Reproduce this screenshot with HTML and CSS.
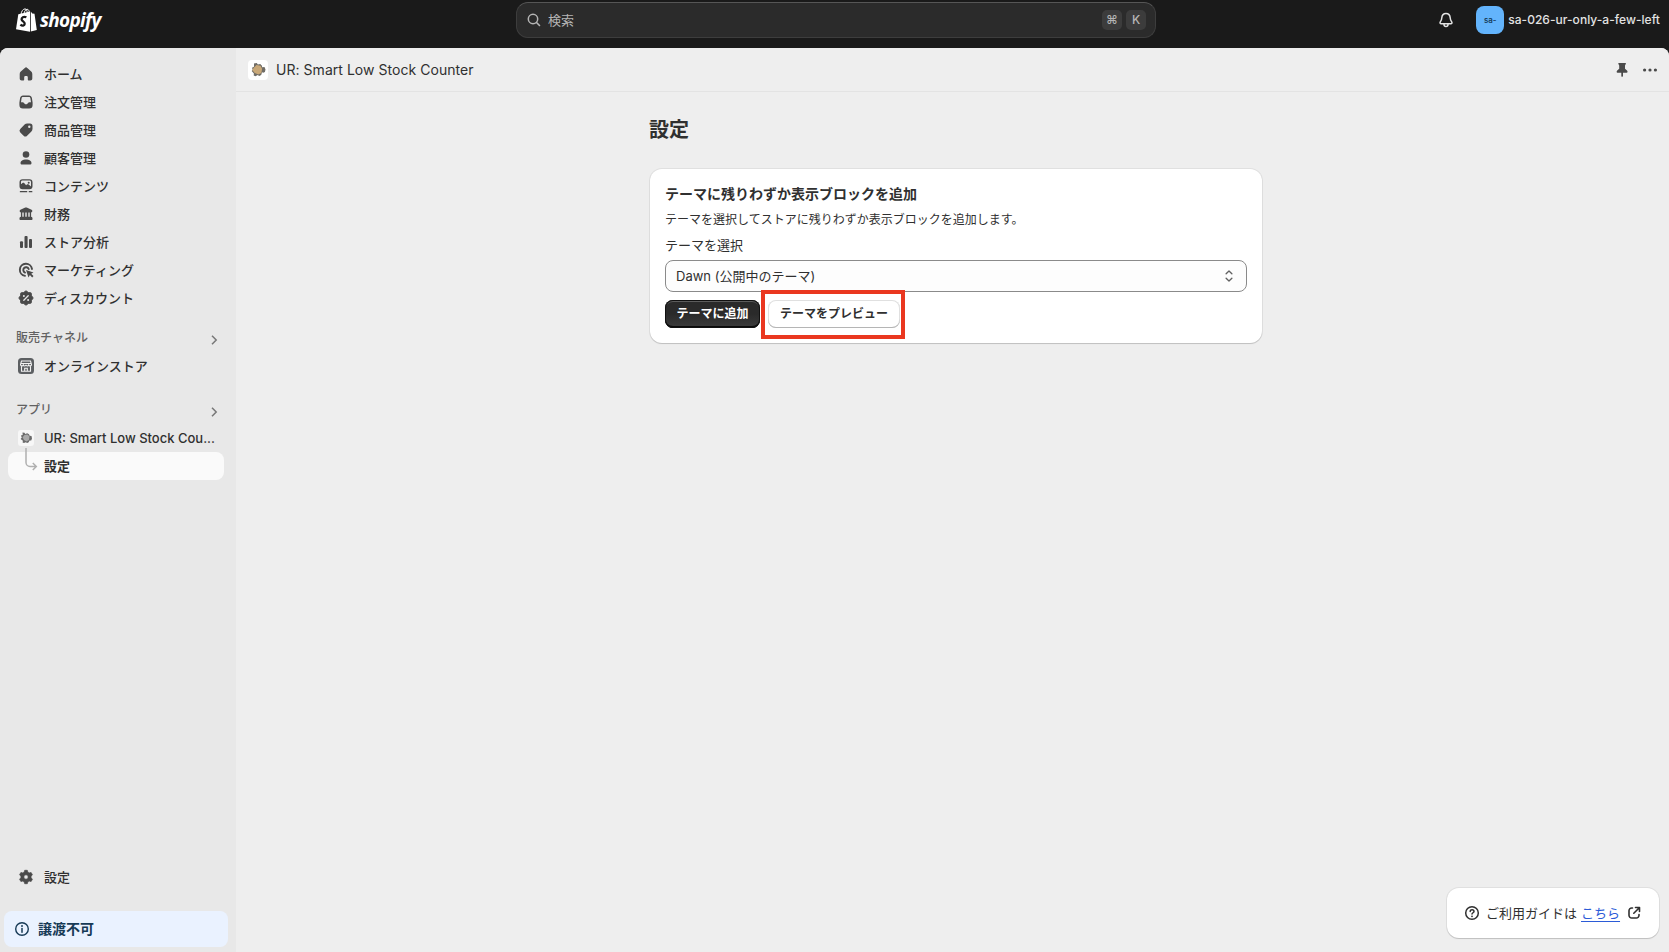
FILE: index.html
```html
<!DOCTYPE html>
<html lang="ja">
<head>
  <meta charset="UTF-8">
  <meta name="viewport" content="width=device-width, initial-scale=1.0">
  <title>設定 | UR: Smart Low Stock Counter</title>
  <link rel="stylesheet" href="styles.css">
</head>
<body>
  <header class="topbar">
    <a class="logo">
      <svg class="logo-bag" viewBox="0 0 21 24">
        <path d="M5 6.5C5.3 3.5 7 .9 9 .9c1.5 0 2.2 1.700 2.200 4.300M8 5.500C8.500 3 9.800 1.300 11.200 1.300c1.300 0 2 1.500 2.100 3" fill="none" stroke="#fff" stroke-width="1"/>
        <path d="M2.300 6.300 14 3.400v20.300L0 21.200z" fill="#fff"/>
        <path d="m14.800 3.500 1.500 1.900 2.200.3L20.800 22l-6 1.600z" fill="#fff"/>
        <path d="M10.400 9.300C7.500 8 5.400 9.500 5.600 11.400c.2 2 3.300 2.200 3.100 4.500-.2 1.900-2.400 2.300-4.300.7" fill="none" stroke="#1a1a1a" stroke-width="2.300"/>
      </svg>
      <span class="logo-text">shopify</span>
    </a>

    <div class="search">
      <svg class="icon" viewBox="0 0 20 20"><circle cx="9" cy="9" r="4.700" fill="none" stroke="currentColor" stroke-width="1.500"/><path d="m12.500 12.500 3 3" fill="none" stroke="currentColor" stroke-width="1.600" stroke-linecap="round"/></svg>
      <span class="search-text">検索</span>
      <kbd>⌘</kbd>
      <kbd>K</kbd>
    </div>

    <div class="account">
      <svg class="icon bell" viewBox="0 0 20 20"><path d="M10 3.600c-2.500 0-4 1.800-4.200 4.200-.1 2-.5 2.700-1.500 4.100-.6.900-.2 1.900.9 1.900h9.600c1.100 0 1.500-1 .9-1.900-1-1.400-1.400-2.100-1.500-4.100C14 5.400 12.500 3.600 10 3.600z"/><path d="M8 14v.4a2 2 0 0 0 4 0V14"/></svg>
      <span class="avatar">sa-</span>
      <span class="store-name">sa-026-ur-only-a-few-left</span>
    </div>
  </header>

  <div class="frame">
    <nav class="sidebar">
      <ul class="nav">
        <li><svg class="icon" viewBox="0 0 20 20"><path d="M8.800 3.900a1.900 1.900 0 0 1 2.500 0l3.900 3.700c.7.700 1.100 1.400 1.100 2.400v4.500c0 1.200-.8 2-2 2h-1.500c-.6 0-1-.4-1-1v-2.200c0-.8-.6-1.300-1.400-1.300h-.8c-.8 0-1.400.5-1.400 1.300v2.200c0 .6-.4 1-1 1H5.700c-1.200 0-2-.8-2-2V10c0-1 .4-1.700 1.100-2.400z"/></svg>ホーム</li>
        <li><svg class="icon" viewBox="0 0 20 20"><path fill-rule="evenodd" d="M7 3.500h6c1.500 0 2.600 1 2.900 2.400l.7 4.600V13a3.500 3.500 0 0 1-3.500 3.500H6.900A3.500 3.500 0 0 1 3.400 13v-2.500l.7-4.600C4.400 4.500 5.500 3.500 7 3.500zM7 5c-.7 0-1.300.5-1.400 1.200L5 10.200h1.700c.6 0 1 .3 1.300.8.900 1.700 3.100 1.700 4 0 .3-.5.7-.8 1.300-.8H15l-.6-4c-.1-.7-.7-1.200-1.400-1.200z"/></svg>注文管理</li>
        <li><svg class="icon" viewBox="0 0 20 20"><path fill-rule="evenodd" d="M11.200 3.500H14a2.500 2.500 0 0 1 2.500 2.500v2.800c0 1-.4 1.900-1.100 2.600l-4.300 4.300a2.500 2.500 0 0 1-3.500 0l-3.300-3.300a2.500 2.500 0 0 1 0-3.500l4.300-4.300c.7-.7 1.600-1.100 2.600-1.100zM13.300 8a1.200 1.200 0 1 0 0-2.400 1.200 1.200 0 0 0 0 2.400z"/></svg>商品管理</li>
        <li><svg class="icon" viewBox="0 0 20 20"><circle cx="10" cy="6.500" r="3.300"/><path d="M4.500 14.900c0-1.800 2.500-3.300 5.500-3.300s5.500 1.500 5.500 3.300c0 .9-.7 1.600-1.600 1.600H6.100c-.9 0-1.600-.7-1.600-1.600z"/></svg>顧客管理</li>
        <li><svg class="icon" viewBox="0 0 20 20"><path fill-rule="evenodd" d="M6.500 3.300h7a3 3 0 0 1 3 3v3.900a3 3 0 0 1-3 3h-7a3 3 0 0 1-3-3V6.300a3 3 0 0 1 3-3zm0 1.300C5.600 4.600 5 5.200 5 6v2.300l1.500-1.200c.6-.5 1.400-.4 1.900.1l1.700 2 .8-.7c.6-.5 1.300-.4 1.800.1L15 10.400V6.200c0-.9-.6-1.600-1.500-1.600zm6.200 3.200a1 1 0 1 0 0-2 1 1 0 0 0 0 2z"/><path d="M4.400 15.700h6.300M13.300 15.700h2.500" stroke="currentColor" stroke-width="1.300" stroke-linecap="round"/></svg>コンテンツ</li>
        <li><svg class="icon" viewBox="0 0 20 20"><path d="M9.300 3.600a1.800 1.800 0 0 1 1.400 0l4.900 2.200c1.300.6.900 2.600-.5 2.600v4.300c.8.200 1.400.9 1.400 1.700v.6c0 .7-.4 1-1 1h-11c-.6 0-1-.3-1-1v-.6c0-.8.600-1.500 1.400-1.700V8.400c-1.400 0-1.800-2-.5-2.600zM6.300 8.600v4.100h1.400V8.600zm3 0v4.100h1.400V8.600zm3 0v4.100h1.400V8.600z" fill-rule="evenodd"/></svg>財務</li>
        <li><svg class="icon" viewBox="0 0 20 20"><rect x="4" y="9.300" width="3" height="6.700" rx="1"/><rect x="8.500" y="3.900" width="3.100" height="12.100" rx="1"/><rect x="13" y="7" width="3" height="9" rx="1"/></svg>ストア分析</li>
        <li><svg class="icon" viewBox="0 0 20 20"><path d="M16 9A6.100 6.100 0 1 0 9 15.900M12.700 9A2.800 2.800 0 1 0 9 12.600" fill="none" stroke="currentColor" stroke-width="1.900" stroke-linecap="round"/><path d="m10 10 7.500 2.500-2.300 1.300 2.300 2.300-1.300 1.300-2.300-2.300-1.400 2.400z"/></svg>マーケティング</li>
        <li><svg class="icon" viewBox="0 0 20 20"><path d="m10 2.800 2.300 1.700 2.800.4.400 2.800 1.700 2.300-1.700 2.300-.4 2.800-2.800.4-2.300 1.700-2.300-1.700-2.800-.4-.4-2.800L2.800 10l1.700-2.300.4-2.800 2.800-.4z" stroke="currentColor" stroke-width="1" stroke-linejoin="round"/><path d="m7.800 12.200 4.400-4.400" stroke="#e8e8e8" stroke-width="1.300" stroke-linecap="round"/><circle cx="7.900" cy="8" r="1" fill="#e8e8e8"/><circle cx="12.100" cy="12" r="1" fill="#e8e8e8"/></svg>ディスカウント</li>
      </ul>

      <div class="nav-title">
        <span>販売チャネル</span>
        <svg class="chevron" viewBox="0 0 20 20"><path d="m8 5.800 4.200 4.200L8 14.200"/></svg>
      </div>
      <ul class="nav">
        <li><svg class="icon" viewBox="0 0 20 20"><rect x="2" y="2" width="16" height="16" rx="3.500" fill="#5c5f62"/><path d="M5.500 5h9l1 3.500c0 1.800-2.400 1.800-2.800.3-.4 1.500-2.500 1.500-2.700 0-.2 1.500-2.300 1.500-2.700 0-.4 1.500-2.800 1.500-2.800-.3zM5.500 10.500v4.700h9v-4.700M8.700 15v-2.700h2.600V15M5 7.500h10" fill="none" stroke="#f1f1f1" stroke-width="1.100"/></svg>オンラインストア</li>
      </ul>

      <div class="nav-title nav-title-apps">
        <span>アプリ</span>
        <svg class="chevron" viewBox="0 0 20 20"><path d="m8 5.800 4.200 4.200L8 14.200"/></svg>
      </div>
      <ul class="nav">
        <li>
          <svg class="icon" viewBox="0 0 20 20"><rect x="2" y="2" width="16" height="16" rx="3" fill="#f7f7f7"/><path d="m6.500 4.500 2 .3.700 1.200 2-.8 1.800 1 .6 1.600 1.900.2.500 2.500-.8 2-1.700.1-.8 1.700-1.500.7-1.500-.8-1.700.8-1.400-.6.3-1.700-2.300-1.800 1.200-1.300-.9-2 1.800-.6z" fill="#6a6a6a"/><path d="m8.500 7 3-.6 2 2.200-.5 3.500-2.500 1.400-2.500-1.500L6.500 9.200z" fill="#a9a9a9"/></svg>
          <span class="truncate">UR: Smart Low Stock Cou...</span>
        </li>
        <li class="active">
          <svg class="branch" viewBox="0 0 20 32"><path d="M10 0v14.500a4 4 0 0 0 4 4h5.500M16.800 15l3.500 3.500-3.500 3.500"/></svg>
          設定
        </li>
      </ul>

      <div class="sidebar-footer">
        <ul class="nav">
          <li><svg class="icon" viewBox="0 0 20 20"><path fill-rule="evenodd" d="M8.700 3.300h2.600l.6 1.900 1.200.7 2-.4 1.300 2.200-1.300 1.500v1.500l1.300 1.600-1.300 2.200-2-.4-1.200.7-.6 1.900H8.700l-.6-1.900-1.200-.7-2 .4-1.300-2.200 1.300-1.600V9.200L3.600 7.700l1.300-2.200 2 .4 1.200-.7zM10 12.200a2.200 2.200 0 1 0 0-4.400 2.200 2.200 0 0 0 0 4.400z" stroke="currentColor" stroke-width=".7" stroke-linejoin="round"/></svg>設定</li>
        </ul>
        <div class="plan-banner">
          <svg class="icon" viewBox="0 0 20 20"><circle cx="10" cy="10" r="6.300" fill="none" stroke="currentColor" stroke-width="1.400"/><path d="M10 9.500v3.800" stroke="currentColor" stroke-width="1.500" stroke-linecap="round"/><circle cx="10" cy="7" r=".95"/></svg>
          <span>譲渡不可</span>
        </div>
      </div>
    </nav>

    <main class="main">
      <div class="app-bar">
        <svg class="app-icon" viewBox="0 0 20 20"><rect width="20" height="20" rx="4" fill="#fff"/><path d="m6 3.500 2.700-.6 1.200 1.600 2.300-.4 1.600 1.500.4 1.700 2.300-.2 1 2.300-.6 2.600-1.600.8-1.300-.5-.8 2.600-2 1.200-1.500-1.200-2.200 1.300-1.800-.8.200-1.900L3.700 11l1-1.300L4 7.800l2-1z" fill="#6f6c66"/><path d="m8.500 5 4 .8 1.600 3-.7 4.300-3 1.400L6.700 13 4.200 10.100 6.200 7.300z" fill="#c9a878"/></svg>
        <span class="app-name">UR: Smart Low Stock Counter</span>
        <svg class="icon" viewBox="0 0 20 20"><path d="M6.800 3h6.700c.4 0 .5.400.4.800l-.9 1.600v3.400l2 1.700c.8.700.8 2.200-.3 2.200h-3.700v3.200L10 17.300l-.7-1.400v-3.200H5.500c-1.100 0-1.100-1.500-.3-2.200l2-1.700V5.400l-.9-1.600c-.1-.4 0-.8.500-.8z"/></svg>
        <svg class="icon" viewBox="0 0 20 20"><circle cx="4.600" cy="10" r="1.600"/><circle cx="10" cy="10" r="1.600"/><circle cx="15.400" cy="10" r="1.600"/></svg>
      </div>

      <div class="page">
        <h1>設定</h1>
        <section class="card">
          <h2>テーマに残りわずか表示ブロックを追加</h2>
          <p>テーマを選択してストアに残りわずか表示ブロックを追加します。</p>
          <div class="label">テーマを選択</div>
          <div class="select">
            <span>Dawn (公開中のテーマ)</span>
            <svg class="icon" viewBox="0 0 20 20"><path d="M6.800 7.500 10 4.500l3.200 3M6.800 12.500l3.200 3 3.200-3" fill="none" stroke="currentColor" stroke-width="1.500" stroke-linecap="round" stroke-linejoin="round"/></svg>
          </div>
          <div class="actions">
            <button class="btn btn-primary">テーマに追加</button>
            <div class="highlighted">
              <button class="btn btn-secondary">テーマをプレビュー</button>
            </div>
          </div>
        </section>
      </div>

      <div class="help">
        <svg class="icon" viewBox="0 0 20 20"><g fill="none" stroke="currentColor" stroke-width="1.500" stroke-linecap="round"><circle cx="10" cy="10" r="6.300"/><path d="M8.200 8.400c0-2.400 3.800-2.300 3.800 0 0 1.300-2 1.400-2 2.700"/></g><circle cx="10" cy="13.300" r=".9"/></svg>
        <span>ご利用ガイドは</span>
        <a href="#">こちら</a>
        <svg class="icon external" viewBox="0 0 20 20"><path d="M8.500 5H7.700A2.700 2.700 0 0 0 5 7.700v4.600A2.700 2.700 0 0 0 7.700 15h4.600a2.700 2.700 0 0 0 2.700-2.700v-.8M11.500 4.500h4v4M15.300 4.700 9.800 10.200" fill="none" stroke="currentColor" stroke-width="1.600" stroke-linecap="round" stroke-linejoin="round"/></svg>
      </div>
    </main>
  </div>
</body>
</html>
```

FILE: styles.css
```css
* {
  box-sizing: border-box;
}

body {
  display: flex;
  flex-direction: column;
  height: 100vh;
  margin: 0;
  overflow: hidden;
  background-color: #1a1a1a;
  color: #303030;
  font-family: Inter, "Noto Sans CJK JP", sans-serif;
  font-size: 13px;
  line-height: 20px;
}

ul {
  list-style: none;
  margin: 0;
  padding: 0;
}

.icon {
  width: 20px;
  height: 20px;
  flex: none;
  fill: currentColor;
}

/* Top bar */
.topbar {
  display: grid;
  grid-template-columns: 516px 640px 1fr;
  align-items: start;
  height: 48px;
  flex: none;
}

.logo {
  display: flex;
  gap: 3px;
  padding: 8px 0 0 16px;
  color: #fff;
}

.logo-bag {
  width: 21px;
  height: 24px;
}

.logo-text {
  font-family: "Open Sans", sans-serif;
  font-size: 19px;
  font-style: italic;
  font-weight: 700;
  line-height: 24px;
  letter-spacing: -0.7px;
}

.search {
  display: flex;
  align-items: center;
  height: 36px;
  margin-top: 2px;
  padding: 0 9px 0 7px;
  border: 1px solid #3d3d3d;
  border-top-color: #565656;
  border-radius: 12px;
  background-color: #2b2b2b;
  color: #b5b5b5;
}

.search-text {
  flex: 1;
  margin-left: 4px;
}

kbd {
  width: 20px;
  height: 20px;
  margin-left: 4px;
  border-radius: 5px;
  background-color: #3c3c3c;
  font-family: Inter, "DejaVu Sans", sans-serif;
  font-size: 12px;
  font-weight: 500;
  text-align: center;
}

.account {
  display: flex;
  align-items: center;
  justify-content: flex-end;
  padding: 6px 9px 0 0;
  color: #e3e3e3;
}

.bell {
  fill: none;
  stroke: currentColor;
  stroke-width: 1.5;
}

.avatar {
  width: 28px;
  height: 28px;
  margin: 0 4px 0 20px;
  border-radius: 8px;
  background-color: #63b4fc;
  color: #10334f;
  font-size: 8px;
  font-weight: 500;
  line-height: 28px;
  text-align: center;
}

.store-name {
  font-size: 12px;
  font-weight: 500;
  letter-spacing: 0.04px;
}

.frame {
  display: flex;
  flex: 1;
  min-height: 0;
  overflow: hidden;
  border-radius: 8px 8px 0 0;
  background-color: #eee;
}

/* Sidebar */
.sidebar {
  display: flex;
  flex-direction: column;
  width: 236px;
  flex: none;
  padding-top: 12px;
  background-color: #e8e8e8;
}

.nav {
  padding: 0 12px 0 8px;
}

.nav li {
  display: flex;
  align-items: center;
  gap: 8px;
  height: 28px;
  padding: 0 8px;
  border-radius: 8px;
  font-weight: 500;
  white-space: nowrap;
}

.nav .icon {
  color: #4a4a4a;
}

.nav .active {
  position: relative;
  padding-left: 36px;
  background-color: #fafafa;
  font-weight: 600;
}

.branch {
  position: absolute;
  left: 8px;
  top: -4px;
  width: 20px;
  height: 32px;
  overflow: visible;
  fill: none;
  stroke: #b0b0b0;
  stroke-width: 1.5;
}

.nav-title {
  display: flex;
  align-items: center;
  justify-content: space-between;
  height: 28px;
  margin: 12px 12px 0 16px;
  color: #616161;
  font-size: 12px;
  font-weight: 500;
}

.nav-title-apps {
  margin-top: 16px;
}

.chevron {
  width: 20px;
  height: 20px;
  margin-top: 4px;
  fill: none;
  stroke: #777;
  stroke-width: 1.5;
}

.sidebar-footer {
  margin-top: auto;
  padding-bottom: 5px;
}

.plan-banner {
  display: flex;
  align-items: center;
  gap: 6px;
  height: 36px;
  margin: 20px 8px 0 4px;
  padding: 0 8px;
  border-radius: 8px;
  background-color: #eaf2ff;
  color: #173a56;
  font-size: 14px;
  font-weight: 600;
}

/* Main area */
.main {
  position: relative;
  flex: 1;
  background-color: #eee;
}

.app-bar {
  display: flex;
  align-items: center;
  gap: 8px;
  height: 44px;
  padding: 0 9px 0 12px;
  border-bottom: 1px solid #e3e3e3;
}

.app-icon {
  width: 20px;
  height: 20px;
}

.app-name {
  flex: 1;
  font-size: 14px;
  letter-spacing: 0.04px;
}

.app-bar .icon {
  color: #4a4a4a;
}

.page {
  width: 612px;
  margin-left: 414px;
  padding-top: 26px;
}

h1 {
  margin: 0 0 0 -1px;
  font-size: 20px;
  font-weight: 600;
  line-height: 24px;
}

.card {
  height: 174px;
  margin-top: 27px;
  padding: 15px;
  border-radius: 12px;
  background-color: #fff;
  box-shadow: 0 1px 1px rgba(0, 0, 0, 0.15), 0 0 0 1px rgba(0, 0, 0, 0.06);
}

h2 {
  margin: 0;
  font-size: 14px;
  font-weight: 600;
  line-height: 20px;
}

.card p {
  margin: 6px 0 0;
  font-size: 12px;
  line-height: 20px;
}

.label {
  margin-top: 5px;
}

.select {
  display: flex;
  align-items: center;
  justify-content: space-between;
  height: 32px;
  margin-top: 5px;
  padding: 0 8px 0 10px;
  border: 1px solid #8a8a8a;
  border-radius: 8px;
  background-color: #fdfdfd;
}

.select .icon {
  width: 18px;
  height: 18px;
  color: #616161;
}

.actions {
  display: flex;
  gap: 8px;
  margin-top: 8px;
}

.btn {
  height: 28px;
  padding: 0;
  border: 0;
  border-radius: 8px;
  font-family: inherit;
  font-size: 12px;
  font-weight: 600;
  line-height: 26px;
}

.btn-primary {
  width: 95px;
  background: linear-gradient(#2a2a2a 50%, #3c3c3c);
  color: #fff;
  box-shadow: inset 0 0 0 1px #111, inset 0 2px 0 #5c5c5c, inset 0 -2px 0 #0a0a0a;
}

.btn-secondary {
  width: 132px;
  background-color: #fff;
  color: #303030;
  box-shadow: inset 0 -1px 0 #b5b5b5, inset 0 0 0 1px #e0e0e0;
}

.highlighted {
  position: relative;
}

.highlighted::after {
  content: "";
  position: absolute;
  inset: -10px -5px -11px -7px;
  border: 4px solid #ea3720;
}

/* Guide link */
.help {
  position: absolute;
  right: 10px;
  bottom: 14px;
  display: flex;
  align-items: center;
  width: 212px;
  height: 50px;
  padding-left: 15px;
  border-radius: 12px;
  background-color: #fff;
  box-shadow: 0 1px 1px rgba(0, 0, 0, 0.15), 0 0 0 1px rgba(0, 0, 0, 0.06);
}

.help span {
  margin: 0 4px;
}

.help a {
  color: #2b5bd7;
  text-underline-offset: 3px;
}

.external {
  margin-left: 4px;
}
```
